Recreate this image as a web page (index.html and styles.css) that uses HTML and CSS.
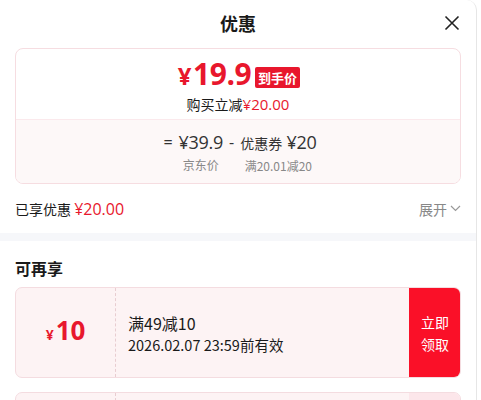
FILE: index.html
```html
<!DOCTYPE html>
<html lang="zh">
<head>
<meta charset="utf-8">
<link rel="stylesheet" href="styles.css">
</head>
<body>
<div class="panel">
  <header class="head">
    <h1 class="title">优惠</h1>
    <span class="close"><svg width="16" height="16" viewBox="0 0 16 16"><path d="M1.5 1.5L14.5 14.5M14.5 1.5L1.5 14.5" stroke="#222" stroke-width="1.6" fill="none"/></svg></span>
  </header>
  <section class="summary">
    <div class="sum-top">
      <div class="final">
        <span class="final-price"><span class="yen">¥</span>19.9</span>
        <span class="badge">到手价</span>
      </div>
      <div class="reduce">购买立减<span class="red">¥20.00</span></div>
    </div>
    <div class="sum-bottom">
      <div class="formula">
        <span class="op">=</span>
        <span class="col"><span class="num">¥39.9</span><span class="lab">京东价</span></span>
        <span class="op">-</span>
        <span class="col"><span class="num"><span class="cn">优惠券</span> ¥20</span><span class="lab">满20.01减20</span></span>
      </div>
    </div>
  </section>
  <div class="enjoyed">
    <span class="enj-l">已享优惠 <span class="red">¥20.00</span></span>
    <span class="expand">展开<svg width="11" height="7" viewBox="0 0 11 7"><path d="M1 1l4.5 4.5L10 1" stroke="#999" stroke-width="1.2" fill="none"/></svg></span>
  </div>
  <div class="band"></div>
  <h2 class="more">可再享</h2>
  <div class="coupons">
    <div class="coupon">
      <div class="c-amt"><span class="c-yen">¥</span>10</div>
      <div class="c-info">
        <div class="c-rule">满49减10</div>
        <div class="c-date">2026.02.07 23:59前有效</div>
      </div>
      <div class="c-btn">立即<br>领取</div>
    </div>
    <div class="coupon coupon2">
      <div class="c-amt"></div>
      <div class="c-info"></div>
      <div class="c-btn c-btn2"></div>
    </div>
  </div>
</div>
</body>
</html>
```
FILE: styles.css
```css
* { box-sizing: border-box; margin: 0; padding: 0; }
html, body { background: #fff; }
body {
  font-family: "Noto Sans CJK SC", "Noto Sans", sans-serif;
  color: #1a1a1a;
  width: 481px;
  height: 400px;
  overflow: hidden;
}
.panel {
  width: 477px;
  height: 420px;
  border-right: 1px solid #e6e6e6;
  border-top-right-radius: 10px;
  overflow: hidden;
}
.head {
  height: 48px;
  display: flex;
  align-items: center;
  justify-content: center;
  position: relative;
}
.title {
  font-size: 18px;
  font-weight: 700;
  color: #1a1a1a;
  line-height: 1;
  margin-top: -2px;
}
.close {
  position: absolute;
  right: 16px;
  top: 15px;
  display: flex;
}
.summary {
  margin: 0 15px 0 15px;
  border: 1px solid #f6dde1;
  border-radius: 8px;
  overflow: hidden;
}
.sum-top {
  height: 71px;
  display: flex;
  flex-direction: column;
  align-items: center;
  padding-top: 8px;
  border-bottom: 1px solid #fbe9ec;
}
.final {
  display: flex;
  align-items: center;
  gap: 4px;
  margin-left: 2px;
}
.final-price {
  font-family: "Open Sans", "Noto Sans", sans-serif;
  font-weight: 700;
  font-size: 30px;
  line-height: 34px;
  color: #e8172d;
  letter-spacing: -0.5px;
}
.yen { font-size: 24px; margin-right: 2px; }
.badge {
  background: #e8172d;
  color: #fff;
  font-size: 13px;
  font-weight: 700;
  line-height: 21px;
  padding: 0 3px;
  border-radius: 2px;
  margin-top: 4px;
}
.reduce {
  font-size: 14px;
  line-height: 20px;
  margin-top: 1px;
  color: #1a1a1a;
}
.reduce .red { font-size: 15px; }
.red { color: #e8172d; font-family: "Open Sans", "Noto Sans", sans-serif; }
.sum-bottom {
  background: #fdf8f8;
  height: 63px;
  display: flex;
  justify-content: center;
  padding-top: 10px;
}
.formula {
  display: flex;
  align-items: flex-start;
  gap: 6px;
  color: #333;
  margin-left: 4px;
}
.op { font-size: 16px; line-height: 24px; color: #333; font-family: "Open Sans", sans-serif; }
.col { display: flex; flex-direction: column; align-items: center; }
.num {
  font-family: "Open Sans", "Noto Sans", sans-serif;
  font-size: 18px;
  line-height: 24px;
  color: #333;
  letter-spacing: -0.3px;
}
.cn { font-family: "Noto Sans CJK SC", sans-serif; font-size: 14px; letter-spacing: 0; }
.lab {
  font-size: 12px;
  line-height: 18px;
  color: #888;
  margin-top: 2px;
}
.enjoyed {
  display: flex;
  justify-content: space-between;
  align-items: center;
  height: 49px;
  padding: 0 15px 0 15px;
}
.enj-l { font-size: 14px; color: #1a1a1a; }
.enj-l .red { font-size: 16px; }
.expand {
  font-size: 14px;
  color: #888;
  display: flex;
  align-items: center;
  gap: 3px;
}
.band {
  height: 8px;
  background: #f6f7fa;
}
.more {
  font-size: 16px;
  font-weight: 700;
  line-height: 22px;
  padding: 16px 15px 0;
  color: #1a1a1a;
}
.coupons {
  padding: 8px 15px 0 15px;
  display: flex;
  flex-direction: column;
  gap: 14px;
}
.coupon {
  height: 91px;
  display: flex;
  background: #fdf3f4;
  border: 1px solid #f4dce0;
  border-radius: 7px;
  overflow: hidden;
}
.c-amt {
  width: 100px;
  border-right: 1px dashed #e8cdd1;
  display: flex;
  align-items: baseline;
  justify-content: center;
  padding-top: 26px;
  color: #e8172d;
  font-family: "Open Sans", "Noto Sans", sans-serif;
  font-weight: 700;
  font-size: 26px;
  line-height: 32px;
}
.c-yen { font-size: 14px; margin-right: 2px; }
.c-info {
  flex: 1;
  padding: 24px 0 0 12px;
  font-size: 16px;
  color: #1a1a1a;
}
.c-rule { line-height: 22px; }
.c-date { font-size: 14.5px; line-height: 22px; }
.c-btn {
  width: 52px;
  background: #fa1028;
  color: #fff;
  font-size: 14px;
  line-height: 22px;
  display: flex;
  align-items: center;
  justify-content: center;
  text-align: center;
  border-radius: 0 6px 6px 0;
  margin: -1px -1px -1px 0;
}
.c-btn2 { background: #fce6ea; }
```
